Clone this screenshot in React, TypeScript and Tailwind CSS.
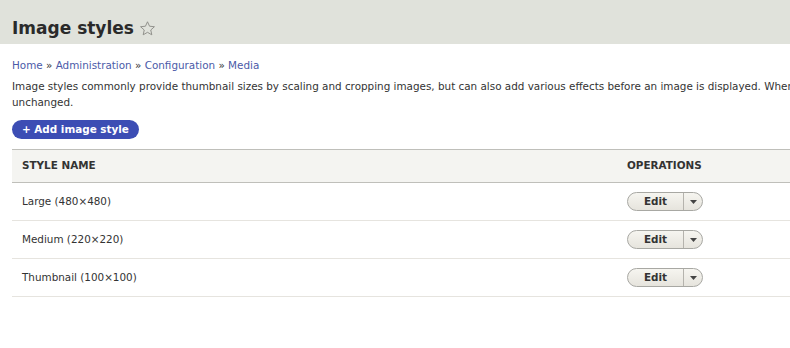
export default function App() {
  const rows = ["Large (480×480)", "Medium (220×220)", "Thumbnail (100×100)"];
  return (
    <div className="h-[348px] w-[790px] overflow-hidden bg-white text-[#333] [font-family:'DejaVu_Sans',sans-serif]">
      <div className="w-[1400px]">
        <div className="flex h-[44px] items-center gap-[5px] bg-[#e0e2db] px-3 pt-[12px]">
          <h1 className="text-[17px] font-bold leading-none text-[#2a2a2a]">Image styles</h1>
          <svg width="17" height="17" viewBox="0 0 24 24" className="mt-[1px]">
            <path
              d="M12 2.5l2.9 6.3 6.9.7-5.2 4.6 1.5 6.8L12 17.4l-6.1 3.5 1.5-6.8-5.2-4.6 6.9-.7z"
              fill="none"
              stroke="#8a8a85"
              strokeWidth="1.3"
              strokeLinejoin="round"
            />
          </svg>
        </div>

        <div className="px-3 pt-[13px]">
          <div className="text-[10.4px] leading-4 text-[#4b5aa8]">
            Home <span className="text-[#333]">»</span> Administration <span className="text-[#333]">»</span> Configuration{" "}
            <span className="text-[#333]">»</span> Media
          </div>
          <p className="mt-[5px] whitespace-nowrap text-[10.4px] leading-4 text-[#333]">
            Image styles commonly provide thumbnail sizes by scaling and cropping images, but can also add various effects
            before an image is displayed. When an image is displayed with a style, a new file is created and the original
            image is left
            <br />
            unchanged.
          </p>
          <button className="mt-[10px] h-[19px] rounded-full bg-[#3c4db4] px-[10px] text-[10.4px] font-bold leading-none text-white">
            + Add image style
          </button>

          <div className="mt-[9px] text-[10.4px]">
            <div className="grid h-[34px] grid-cols-[605px_1fr] items-center border-y border-[#bfbfba] bg-[#f4f4f1] font-bold uppercase text-[#333]">
              <div className="px-[10px]">Style name</div>
              <div className="px-[10px]">Operations</div>
            </div>
            {rows.map((r) => (
              <div key={r} className="grid h-[38px] grid-cols-[605px_1fr] items-center border-b border-[#e6e4df]">
                <div className="px-[10px]">{r}</div>
                <div className="px-[10px]">
                  <div className="flex h-[19px] w-[76px] items-center overflow-hidden rounded-full border border-[#a8a8a3] bg-gradient-to-b from-[#f6f5f0] to-[#e6e4dd]">
                    <span className="flex w-[55px] justify-center font-bold text-[#333]">Edit</span>
                    <span className="h-full w-px bg-[#b5b3ad]" />
                    <span className="flex flex-1 justify-center">
                      <svg width="7" height="4" viewBox="0 0 7 4">
                        <path d="M0 0h7L3.5 4z" fill="#444" />
                      </svg>
                    </span>
                  </div>
                </div>
              </div>
            ))}
          </div>
        </div>
      </div>
    </div>
  );
}
